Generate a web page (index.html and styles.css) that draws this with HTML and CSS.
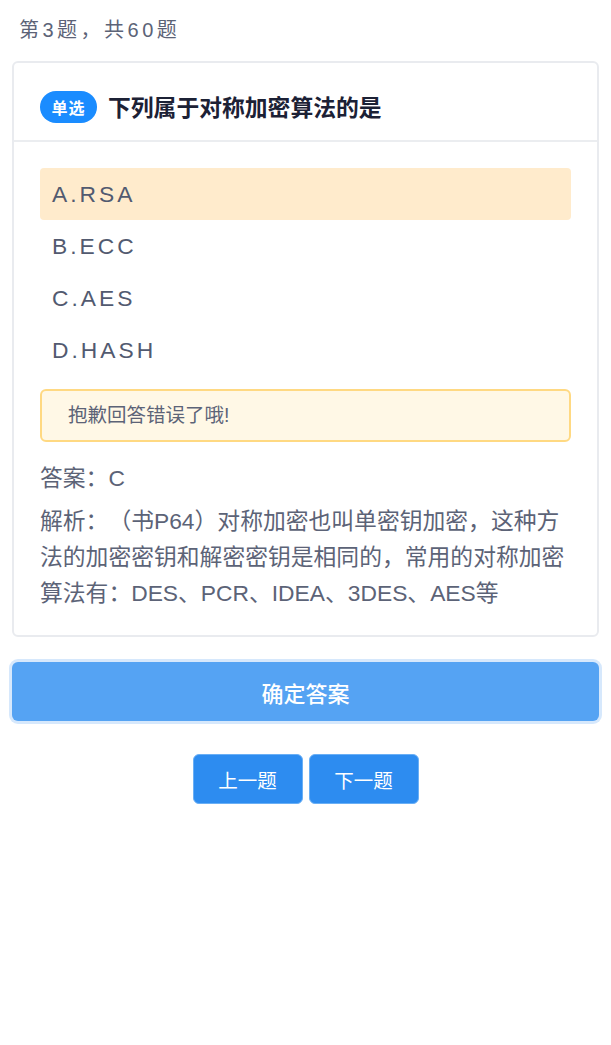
FILE: index.html
```html
<!DOCTYPE html>
<html lang="zh-CN">
<head>
  <meta charset="UTF-8">
  <meta name="viewport" content="width=device-width, initial-scale=1.0">
  <title>答题</title>
  <link rel="stylesheet" href="styles.css">
</head>
<body>
  <div class="page">
    <div class="progress">第3题，共60题</div>

    <div class="card">
      <div class="question">
        <span class="badge">单选</span>
        <h1>下列属于对称加密算法的是</h1>
      </div>

      <div class="body">
        <ul class="options">
          <li class="option selected">A.RSA</li>
          <li class="option">B.ECC</li>
          <li class="option">C.AES</li>
          <li class="option">D.HASH</li>
        </ul>

        <div class="tip">抱歉回答错误了哦!</div>

        <p class="answer">答案：C</p>
        <p class="analysis">解析：（书P64）对称加密也叫单密钥加密，这种方法的加密密钥和解密密钥是相同的，常用的对称加密算法有：DES、PCR、IDEA、3DES、AES等</p>
      </div>
    </div>

    <button class="submit">确定答案</button>

    <div class="nav">
      <button class="nav-btn">上一题</button>
      <button class="nav-btn">下一题</button>
    </div>
  </div>
</body>
</html>
```

FILE: styles.css
```css
/* General styles */
* {
  margin: 0;
  padding: 0;
  box-sizing: border-box;
  font-family: "Liberation Sans", "Noto Sans CJK SC", sans-serif;
}

body {
  background-color: #fff;
  text-spacing-trim: space-all;
}

.page {
  padding: 0 12px;
}

/* Progress line */
.progress {
  line-height: 61px;
  padding-left: 7px;
  font-size: 20px;
  letter-spacing: 3.5px;
  color: #5c6377;
}

/* Question card */
.card {
  border: 2px solid #e9ebef;
  border-radius: 6px;
}

.question {
  display: flex;
  align-items: center;
  gap: 11px;
  padding: 28px 26px 17px;
  border-bottom: 2px solid #ebedf0;
}

.badge {
  display: flex;
  align-items: center;
  justify-content: center;
  width: 57px;
  height: 32px;
  border-radius: 16px;
  background-color: #1a8cff;
  color: #fff;
  font-size: 16px;
  font-weight: bold;
  letter-spacing: 1px;
}

h1 {
  font-size: 22.8px;
  font-weight: bold;
  color: #1c2135;
  margin-top: -2px;
}

.body {
  padding: 26px 26px 24px;
}

.options {
  list-style: none;
}

.option {
  height: 52px;
  line-height: 52px;
  padding-left: 12px;
  border-radius: 4px;
  font-size: 22.8px;
  letter-spacing: 3px;
  color: #525a70;
}

.option.selected {
  background-color: #ffebcc;
}

.tip {
  margin-top: 13px;
  height: 53px;
  line-height: 49px;
  padding-left: 26px;
  border: 2px solid #ffd982;
  border-radius: 6px;
  background-color: #fff8e6;
  font-size: 19.5px;
  color: #5c6377;
}

.answer,
.analysis {
  font-size: 22.8px;
  line-height: 36px;
  color: #5c6377;
}

.answer {
  margin-top: 18px;
}

.analysis {
  margin-top: 7px;
}

/* Buttons */
button {
  border: none;
  color: #fff;
  cursor: pointer;
}

.submit {
  display: block;
  width: 100%;
  height: 59px;
  margin-top: 25px;
  border-radius: 6px;
  background-color: #55a3f3;
  box-shadow: 0 0 0 3px #d6e8fc;
  font-size: 22px;
  font-weight: 500;
}

.nav {
  display: flex;
  justify-content: center;
  gap: 6px;
  margin-top: 33px;
}

.nav-btn {
  width: 110px;
  height: 50px;
  border: 1px solid #6aaff5;
  border-radius: 6px;
  background-color: #2d8cf0;
  font-size: 19.5px;
}
```
